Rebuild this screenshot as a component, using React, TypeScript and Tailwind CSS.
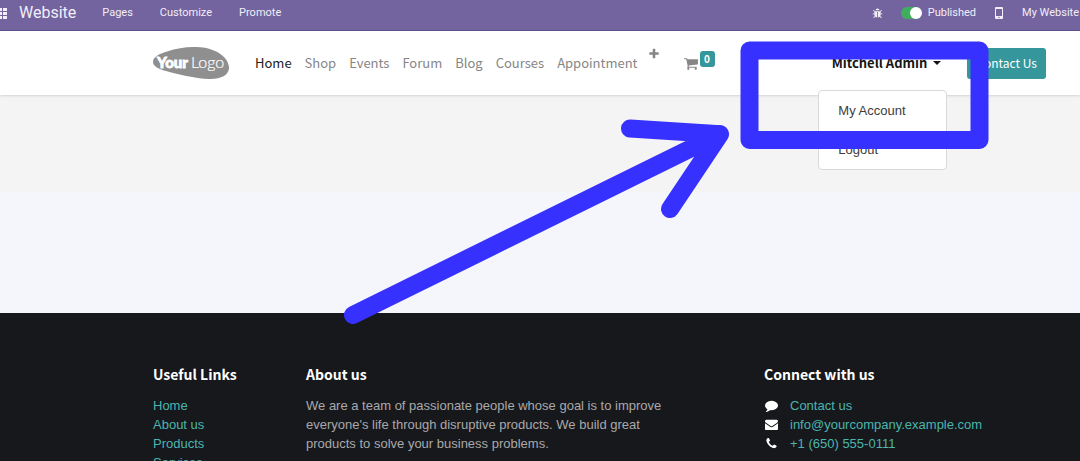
import React from "react";

const CART =
  "M640 1536q0 52-38 90t-90 38-90-38-38-90 38-90 90-38 90 38 38 90zm896 0q0 52-38 90t-90 38-90-38-38-90 38-90 90-38 90 38 38 90zm128-1088v512q0 24-16.5 42.5t-40.5 21.5l-1044 122q13 60 13 70 0 16-24 64h920q26 0 45 19t19 45-19 45-45 19h-1024q-26 0-45-19t-19-45q0-11 8-31.5t16-36 21.5-40 15.5-29.5l-177-823h-204q-26 0-45-19t-19-45 19-45 45-19h256q16 0 28.5 6.5t19.5 15.5 13 24.5 8 26 5.5 29.5 4.5 26h1201q26 0 45 19t19 45z";
const COMMENT =
  "M1792 896q0 174-120 321.5t-326 233-450 85.5q-70 0-145-8-198 175-460 242-49 14-114 22-17 2-30.5-9t-17.5-29v-1q-3-4-.5-12t2-10 4.5-9.5l6-9 7-8.5 8-9q7-8 31-34.5t34.5-38 31-39.5 32.5-51 27-59 26-76q-157-89-247.5-220t-90.5-281q0-130 71-248.5t191-204.5 286-136.5 348-50.5q244 0 450 85.5t326 233 120 321.5z";
const ENVELOPE =
  "M1792 710v794q0 66-47 113t-113 47h-1472q-66 0-113-47t-47-113v-794q44 49 101 87 362 246 497 345 57 42 92.5 65.5t94.5 48 110 24.5h2q51 0 110-24.5t94.5-48 92.5-65.5q170-123 498-345 57-39 100-87zm0-294q0 79-49 151t-122 123q-376 261-468 325-10 7-42.5 31t-54 38.5-52 32.5-57.5 27-50 9h-2q-23 0-50-9t-57.5-27-52-32.5-54-38.5-42.5-31q-91-64-262-182.5t-205-142.5q-62-42-117-115.5t-55-136.5q0-78 41.5-130t118.5-52h1472q65 0 112.5 47t47.5 113z";
const PHONE =
  "M1600 1240q0 27-10 70.5t-21 68.5q-21 50-122 106-94 51-186 51-27 0-53-3.5t-57.5-12.5-47-14.5-55.5-20.5-49-18q-98-35-175-83-127-79-264-216t-216-264q-48-77-83-175-3-9-18-49t-20.5-55.5-14.5-47-12.5-57.5-3.5-53q0-92 51-186 56-101 106-122 25-11 68.5-21t70.5-10q14 0 21 3 18 6 53 76 11 19 30 54t35 63.5 31 53.5q3 4 17.5 25t21.5 35.5 7 28.5q0 20-28.5 50t-62 55-62 53-28.5 46q0 9 5 22.5t8.5 20.5 14 24 11.5 19q76 137 174 235t235 174q2 1 19 11.5t24 14 20.5 8.5 22.5 5q18 0 46-28.5t53-62 55-62 50-28.5q14 0 28.5 7t35.5 21.5 25 17.5q25 15 53.5 31t63.5 35 54 30q70 35 76 53 3 7 3 21z";
const BUG =
  "M1696 960q0 26-19 45t-45 19h-224q0 171-67 290l208 209q19 19 19 45t-19 45q-18 19-45 19t-45-19l-198-197q-5 5-15 13t-42 28.5-65 36.5-82 29-97 13v-896h-128v896q-51 0-101.5-13.5t-87-33-66-39-43.5-32.5l-15-14-183 207q-20 21-48 21-24 0-43-16-19-18-20.5-44.5t15.5-46.5l202-227q-58-114-58-274h-224q-26 0-45-19t-19-45 19-45 45-19h224v-294l-173-173q-19-19-19-45t19-45 45-19 45 19l173 173h844l173-173q19-19 45-19t45 19 19 45-19 45l-173 173v294h224q26 0 45 19t19 45zm-480-576h-640q0-133 93.5-226.5t226.5-93.5 226.5 93.5 93.5 226.5z";
const PLUS =
  "M1600 736v192q0 40-28 68t-68 28h-416v416q0 40-28 68t-68 28h-192q-40 0-68-28t-28-68v-416h-416q-40 0-68-28t-28-68v-192q0-40 28-68t68-28h416v-416q0-40 28-68t68-28h192q40 0 68 28t28 68v416h416q40 0 68 28t28 68z";

function Icon({ d, className }: { d: string; className: string }) {
  return (
    <svg viewBox="0 0 1792 1792" fill="currentColor" aria-hidden="true" className={className}>
      <path d={d} />
    </svg>
  );
}

function AdminBar() {
  return (
    <div className="flex h-[31px] shrink-0 items-center justify-between overflow-hidden whitespace-nowrap border-b border-[#5f5290] bg-[#73639f] pb-1 pr-[1px] font-['Roboto',sans-serif] text-[11px] text-[#f1eef8]">
      <div className="flex items-center">
        <button aria-label="Applications" className="w-[7px]">
          <svg viewBox="0 0 7 11" fill="currentColor" className="h-[11px] w-[7px]">
            <path d="M0 0h2v3H0zM3 0h4v3H3zM0 4h2v3H0zM3 4h4v3H3zM0 8h2v3H0zM3 8h4v3H3z" />
          </svg>
        </button>
        <a href="#website" className="ml-3 text-base">Website</a>
        <nav className="ml-[26px] flex items-center gap-[27px]">
          <a href="#pages">Pages</a>
          <a href="#customize">Customize</a>
          <a href="#promote">Promote</a>
        </nav>
      </div>
      <div className="flex items-center">
        <button aria-label="Debug"><Icon d={BUG} className="h-[11px] w-[11px]" /></button>
        <label className="ml-[18px] flex items-center gap-[6px]">
          <input type="checkbox" defaultChecked className="peer sr-only" />
          <span className="flex h-3 w-[21px] items-center justify-end rounded-full bg-[#3fae5e]">
            <span className="h-3 w-3 rounded-full bg-white" />
          </span>
          Published
        </label>
        <button aria-label="Mobile preview" className="ml-[19px]">
          <svg viewBox="0 0 8 12" className="h-3 w-2">
            <path
              fill="currentColor"
              fillRule="evenodd"
              d="M1 0h6a1 1 0 0 1 1 1v10a1 1 0 0 1-1 1H1a1 1 0 0 1-1-1V1a1 1 0 0 1 1-1zM1 2v7h6V2zM3.3 10.4a.7.7 0 1 0 1.4 0 .7.7 0 1 0-1.4 0z"
            />
          </svg>
        </button>
        <a href="#site" className="ml-[19px]">My Website</a>
      </div>
    </div>
  );
}

function Logo() {
  return (
    <a href="#home" aria-label="YourLogo">
      <svg viewBox="0 0 76 34" className="h-[34px] w-[76px]">
        <path
          fill="#8f8f8f"
          d="M0 16C0 11 6 8 14 5.500C24 2 34 .500 44 1C61 1.500 75 10 76 21C76.500 29 68 33.500 56 33C42 32.500 24 28 13 25C5 23 0 20 0 16Z"
        />
        <text x="4" y="22" fill="#fff" stroke="#fff" strokeWidth=".8" fontFamily="Lato, sans-serif" fontWeight="900" fontSize="15">Your</text>
        <text x="38" y="22" fill="#fff" stroke="#fff" strokeWidth=".2" fontFamily="Lato, sans-serif" fontWeight="300" fontSize="16">Logo</text>
      </svg>
    </a>
  );
}

const NAV = ["Home", "Shop", "Events", "Forum", "Blog", "Courses", "Appointment"];

function Header() {
  return (
    <header className="relative z-10 flex h-16 shrink-0 items-center justify-between whitespace-nowrap bg-white pl-[153px] pr-[34px] font-['Noto_Sans_CJK_SC',sans-serif] text-[13px] leading-5 text-[#868686] shadow-sm">
      <div className="flex items-center">
        <Logo />
        <nav className="ml-[26px] flex items-center gap-[13px]">
          {NAV.map((item) => (
            <a key={item} href={"#" + item.toLowerCase()} className={item === "Home" ? "text-[#202020]" : ""}>
              {item}
            </a>
          ))}
        </nav>
        <button aria-label="Add menu item" className="mb-[18px] ml-[10px]">
          <Icon d={PLUS} className="h-3 w-3" />
        </button>
        <a href="#cart" aria-label="Cart" className="ml-6 flex items-center gap-[1px]">
          <Icon d={CART} className="h-[15px] w-[15px]" />
          <span className="mb-2 flex h-4 w-[15px] items-center justify-center rounded-[3px] bg-[#35979c] text-[10px] font-bold text-white">0</span>
        </a>
      </div>
      <div className="flex items-center">
        <div className="relative mr-[26px]">
          <button className="flex items-center gap-[6px] font-bold text-[#151515]">
            Mitchell Admin
            <span className="border-x-4 border-t-4 border-x-transparent border-t-current" />
          </button>
          <div className="absolute right-[-6px] top-[37px] flex w-[129px] flex-col rounded border border-[#d9d9d9] bg-white font-['Liberation_Sans',sans-serif] text-[13px] text-[#3c3c3c]">
            <a href="#account" className="px-[19px] leading-[39px]">My Account</a>
            <a href="#logout" className="px-[19px] leading-[39px]">Logout</a>
          </div>
        </div>
        <a href="#contact" className="flex h-[31px] items-center rounded-[3px] bg-[#35979c] px-[9px] text-xs text-white">
          Contact Us
        </a>
      </div>
    </header>
  );
}

const LINKS = ["Home", "About us", "Products", "Services"];
const CONTACTS = [
  { icon: COMMENT, label: "Contact us", href: "#contact" },
  { icon: ENVELOPE, label: "info@yourcompany.example.com", href: "mailto:info@yourcompany.example.com" },
  { icon: PHONE, label: "+1 (650) 555-0111", href: "tel:+16505550111" },
];

function Heading({ children }: { children: React.ReactNode }) {
  return (
    <h2 className="mb-3 font-['Noto_Sans_CJK_SC',sans-serif] text-sm font-bold leading-5 text-white">{children}</h2>
  );
}

function Footer() {
  return (
    <footer className="flex flex-1 bg-[#17181c] pl-[153px] pr-[34px] pt-[51px] text-[13px] leading-[19px] text-[#a9a9ab]">
      <section className="w-[153px] shrink-0">
        <Heading>Useful Links</Heading>
        <ul className="text-[#4bb5ae]">
          {LINKS.map((l) => (
            <li key={l}><a href="#top">{l}</a></li>
          ))}
        </ul>
      </section>
      <section className="flex-1">
        <Heading>About us</Heading>
        <p className="max-w-[370px]">
          We are a team of passionate people whose goal is to improve everyone's life through disruptive products. We
          build great products to solve your business problems.
        </p>
      </section>
      <section className="w-[282px] shrink-0">
        <Heading>Connect with us</Heading>
        <ul className="text-[#4bb5ae]">
          {CONTACTS.map((c) => (
            <li key={c.label} className="flex items-center gap-3">
              <Icon d={c.icon} className="ml-[1px] h-[13px] w-[13px] text-white" />
              <a href={c.href}>{c.label}</a>
            </li>
          ))}
        </ul>
      </section>
    </footer>
  );
}

function Annotation() {
  return (
    <svg
      viewBox="0 0 1080 340"
      className="pointer-events-none absolute right-0 top-0 z-20 h-[340px] w-[1080px]"
      fill="none"
      stroke="#3731ff"
      strokeWidth="18"
      strokeLinecap="round"
      strokeLinejoin="round"
      aria-hidden="true"
    >
      <path d="M749.500 50.500H979.500V140H749.500Z" />
      <path d="M353 315L720 134M630 128.500L720 134.300L670 209" />
    </svg>
  );
}

export default function App() {
  return (
    <div className="relative flex h-screen flex-col overflow-hidden bg-[#f4f6fb] font-['Liberation_Sans',sans-serif]">
      <AdminBar />
      <Header />
      <main className="shrink-0">
        <div className="h-[97px] bg-[#f4f4f4]" />
        <div className="h-[121px]" />
      </main>
      <Footer />
      <Annotation />
    </div>
  );
}
